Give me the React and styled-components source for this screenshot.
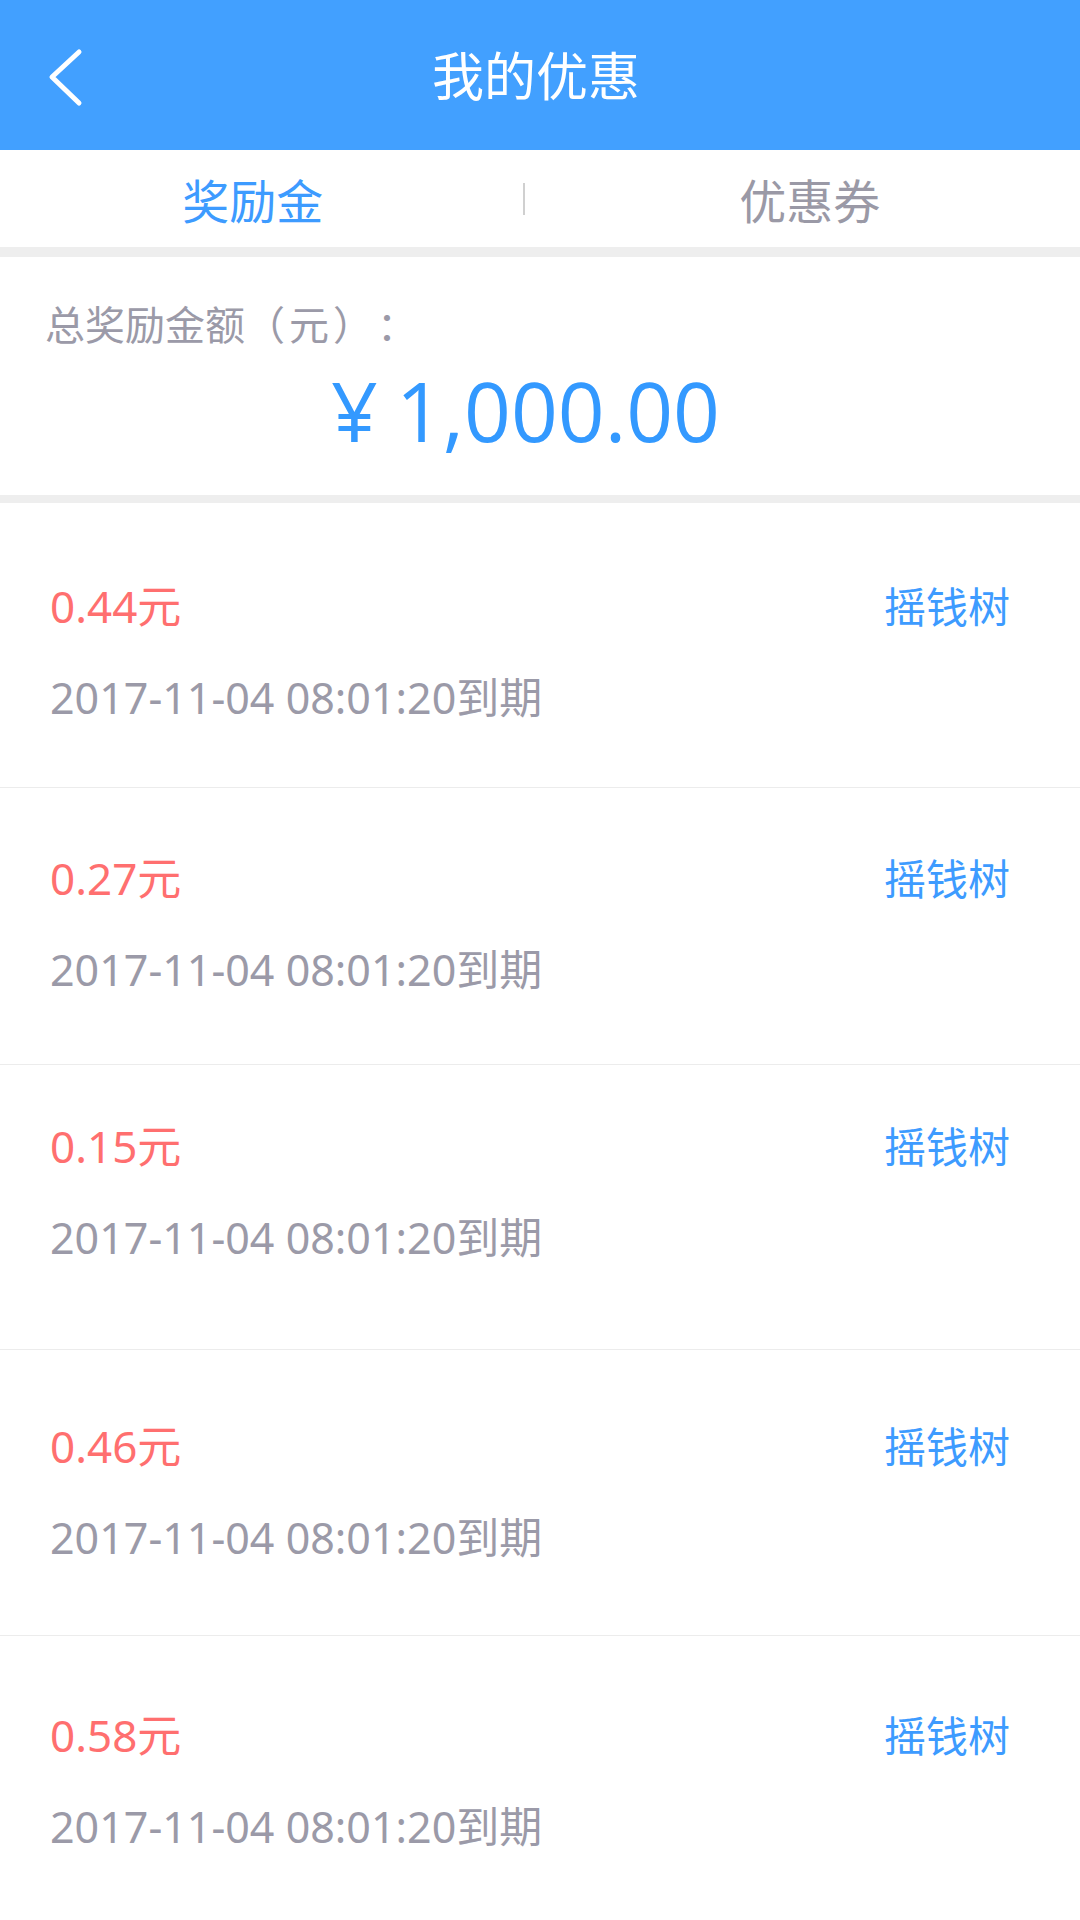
import React from 'react'
import styled, { createGlobalStyle } from 'styled-components'

const GlobalStyle = createGlobalStyle`
  body {
    margin: 0;
    background: #fff;
    font-family: "Noto Sans", "Noto Sans CJK SC", sans-serif;
    text-spacing-trim: space-all;
  }
`

const Page = styled.div`
  width: 1080px;
  min-height: 1920px;
  background: #fff;
`

const Header = styled.header`
  height: 150px;
  background: #42a0ff;
  display: flex;
  align-items: center;
  justify-content: center;
  position: relative;
`

const BackBtn = styled.div`
  position: absolute;
  left: 46px;
  top: 46px;
  width: 40px;
  height: 62px;
`

const Title = styled.h1`
  margin: 0;
  color: #fff;
  font-size: 52px;
  font-weight: 400;
  line-height: 1;
  margin-top: 2px;
  padding-right: 8px;
`

const Tabs = styled.div`
  height: 97px;
  display: flex;
  align-items: center;
  border-bottom: 10px solid #eeeeee;
`

const Tab = styled.div`
  flex: ${p => p.grow};
  text-align: center;
  font-size: 47px;
  color: ${p => (p.active ? '#3d9bff' : '#9a99a6')};
  padding-left: ${p => p.pl || 0}px;
  padding-right: ${p => p.pr || 0}px;
`

const TabLine = styled.div`
  width: 2px;
  height: 32px;
  background: #d0d0d0;
`

const Summary = styled.section`
  height: 238px;
  border-bottom: 8px solid #eeeeee;
  box-sizing: content-box;
  padding: 0 45px;
  display: flex;
  flex-direction: column;
`

const SummaryLabel = styled.div`
  margin-top: 43px;
  font-size: 40px;
  line-height: 46px;
  color: #9b9aa8;
  font-family: "Noto Sans CJK SC", sans-serif;
`

const Unit = styled.span`
  letter-spacing: 4px;
`

const Total = styled.div`
  margin-top: 14px;
  text-align: center;
  font-size: 82px;
  line-height: 100px;
  color: #3399ff;
  padding-right: 29px;
  font-family: "Open Sans", "Noto Sans", sans-serif;
`

const Yen = styled.span`
  margin-right: 18px;
`

const Row = styled.div`
  height: ${p => p.h}px;
  box-sizing: border-box;
  padding: ${p => p.pt}px 70px 0 50px;
  border-bottom: 1px solid #ececec;
`

const Line = styled.div`
  display: flex;
  justify-content: space-between;
  align-items: center;
  height: 60px;
`

const Amount = styled.span`
  font-size: 44px;
  color: #ff6f6f;
`

const Source = styled.span`
  font-size: 42px;
  color: #3d9bff;
`

const Expire = styled.div`
  margin-top: 34px;
  height: 60px;
  line-height: 60px;
  font-size: 43px;
  color: #9b9aa8;
`

const rows = [
  { amount: '0.44', pt: 71, h: 285 },
  { amount: '0.27', pt: 58, h: 277 },
  { amount: '0.15', pt: 49, h: 285 },
  { amount: '0.46', pt: 64, h: 286 },
  { amount: '0.58', pt: 67, h: 285 },
]

const App = () => {
  return (
    <Page>
      <GlobalStyle />
      <Header>
        <BackBtn>
          <svg width="40" height="62" viewBox="0 0 40 62">
            <polyline points="33,6 6,31 33,57" fill="none" stroke="#fff" strokeWidth="5" strokeLinecap="round" strokeLinejoin="round" />
          </svg>
        </BackBtn>
        <Title>我的优惠</Title>
      </Header>

      <Tabs>
        <Tab grow="521" active pr={17}>奖励金</Tab>
        <TabLine />
        <Tab grow="557" pl={15}>优惠券</Tab>
      </Tabs>

      <Summary>
        <SummaryLabel>总奖励金额<Unit>（元）：</Unit></SummaryLabel>
        <Total><Yen>¥</Yen>1,000.00</Total>
      </Summary>

      {rows.map((r, i) => (
        <Row key={i} pt={r.pt} h={r.h}>
          <Line>
            <Amount>{r.amount}元</Amount>
            <Source>摇钱树</Source>
          </Line>
          <Expire>2017-11-04 08:01:20到期</Expire>
        </Row>
      ))}
    </Page>
  )
}

export default App
